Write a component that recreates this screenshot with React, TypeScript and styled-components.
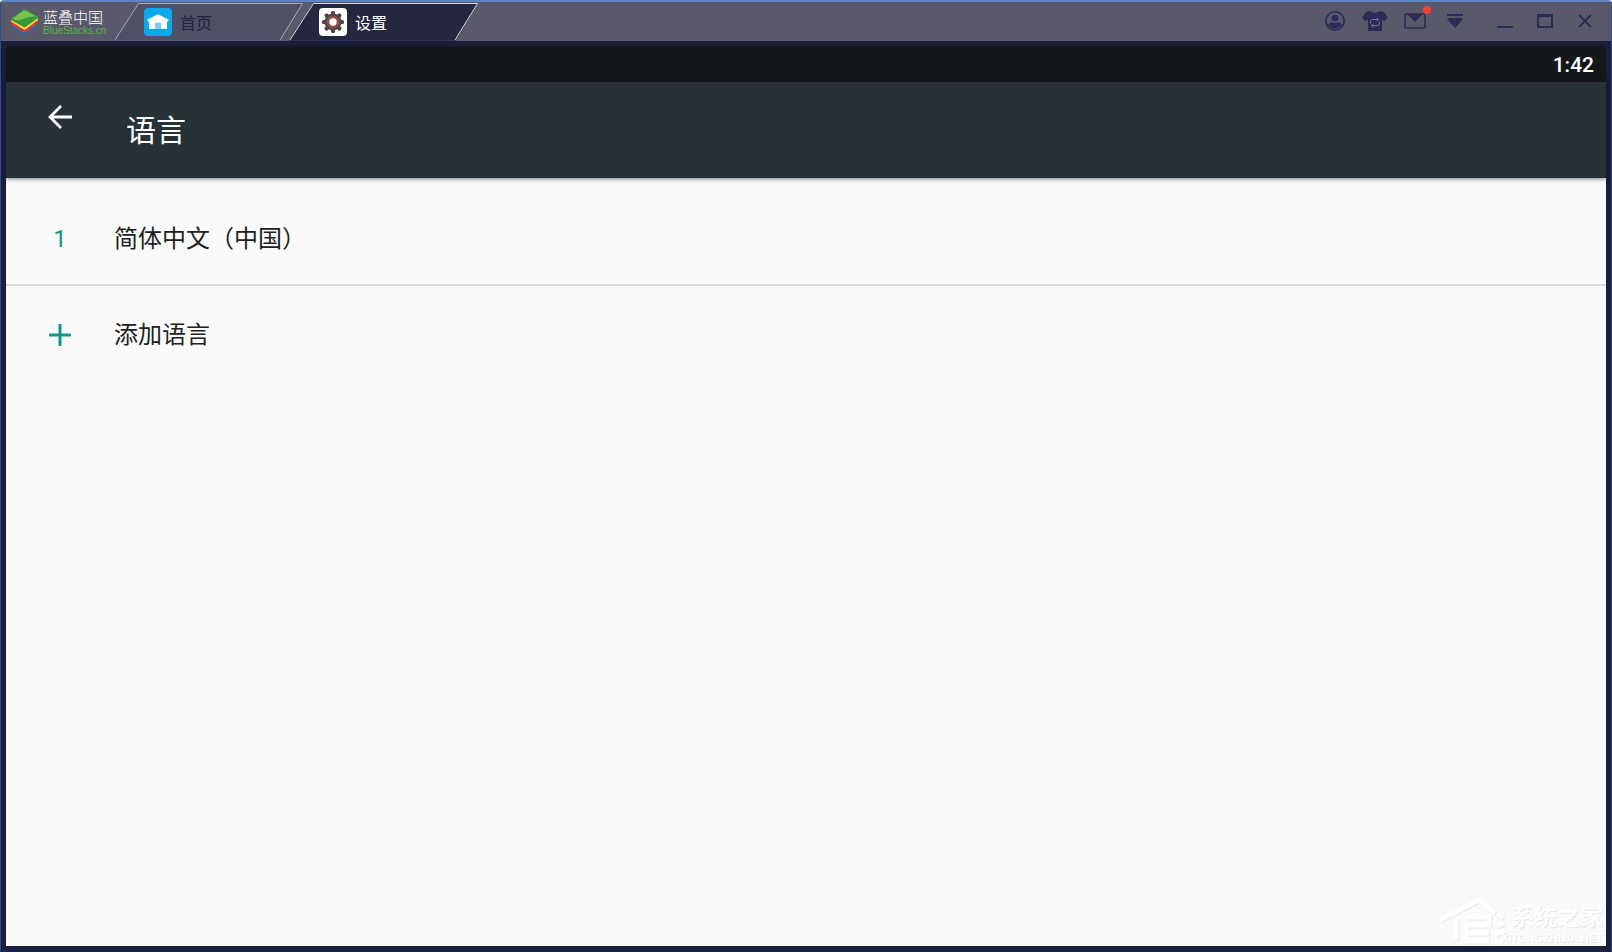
import React from "react";
import styled, { createGlobalStyle } from "styled-components";

const GlobalStyle = createGlobalStyle`
  *, *::before, *::after { box-sizing: border-box; }
  body {
    margin: 0;
    background: #fff;
    font-family: Roboto, "Noto Sans CJK SC", sans-serif;
  }
  button { border: 0; padding: 0; margin: 0; background: none; color: inherit; font: inherit; cursor: pointer; }
  svg { display: block; flex: none; }
`;

const AppWindow = styled.div`
  display: flex;
  flex-direction: column;
  min-height: 100vh;
  background: #1a1e3c;
  border: 1px solid #2c4c8c;
  border-top: 2px solid #5c84c0;
  border-bottom-color: #1a2456;
  border-radius: 4px 4px 0 0;
  overflow: hidden;
`;

const TitleBar = styled.header`
  display: flex;
  align-items: stretch;
  height: 39px;
  background: #5a596b;
`;

const Brand = styled.div`
  display: flex;
  align-items: center;
  gap: 4px;
  width: 113px;
  padding-left: 9px;
`;

const BrandText = styled.div`
  display: flex;
  flex-direction: column;
  padding-top: 2px;
  white-space: nowrap;
`;

const BrandName = styled.span`
  font: 300 15px/16px "Noto Sans CJK SC", sans-serif;
  color: #fff;
`;

const BrandSite = styled.span`
  font: 10px/11px "Liberation Sans", sans-serif;
  color: #52b848;
`;

const Tabs = styled.nav`
  display: flex;
`;

const Tab = styled.button<{ $active?: boolean }>`
  position: relative;
  display: flex;
  align-items: center;
  gap: 8px;
  width: 189px;
  padding-left: 30px;
  font-size: 16px;
  line-height: 24px;
  color: ${(p) => (p.$active ? "#fff" : "#1f2140")};
  & + & { margin-left: -14px; }
`;

const TabShape = styled.svg`
  position: absolute;
  inset: 0;
`;

const TabIcon = styled.span<{ $color: string }>`
  position: relative;
  display: grid;
  place-items: center;
  width: 28px;
  height: 28px;
  border-radius: 4px;
  background: ${(p) => p.$color};
`;

const TabLabel = styled.span`
  position: relative;
  padding-top: 4px;
`;

const Tools = styled.div`
  display: flex;
  margin-left: auto;
  padding-right: 6px;
  color: #2b2b55;
`;

const ToolGroup = styled.div`
  display: flex;
  & + & { margin-left: 10px; }
`;

const ToolButton = styled.button`
  position: relative;
  display: grid;
  place-items: center;
  width: 40px;
  height: 38px;
`;

const UnreadDot = styled.span`
  position: absolute;
  top: 4px;
  right: 4px;
  width: 8px;
  height: 8px;
  border-radius: 50%;
  background: #f8402f;
`;

const Screen = styled.main`
  display: flex;
  flex: 1;
  flex-direction: column;
  margin: 5px 5px;
  background: #fafafa;
`;

const StatusBar = styled.div`
  display: flex;
  align-items: center;
  justify-content: flex-end;
  height: 36px;
  padding: 2px 12px 0 0;
  background: #14181b;
  color: #fff;
  font-size: 21px;
  font-weight: 500;
`;

const AppBar = styled.div`
  display: flex;
  align-items: flex-start;
  gap: 46px;
  height: 96px;
  padding: 18px 38px;
  background: #263238;
  color: #fff;
  box-shadow: 0 1px 4px rgba(0, 0, 0, 0.5);
`;

const BackButton = styled.button`
  display: grid;
  place-items: center;
  width: 32px;
  height: 34px;
`;

const Title = styled.h1`
  margin: 11px 0 0 4px;
  font-size: 30px;
  font-weight: 400;
  line-height: 40px;
`;

const Languages = styled.ol`
  margin: 0 0 4px;
  padding: 16px 0 0;
  list-style: none;
`;

const Row = styled.button`
  display: flex;
  align-items: center;
  width: 100%;
  height: 90px;
  padding-left: 36px;
  font-size: 24px;
  line-height: 36px;
  color: #212121;
  text-align: left;
`;

const LanguageItem = styled.li`
  border-bottom: 2px solid #d8d8d8;
`;

const Marker = styled.span`
  display: flex;
  justify-content: center;
  width: 36px;
  margin-right: 36px;
  color: #159586;
`;

const Watermark = styled.footer`
  display: flex;
  align-items: flex-end;
  justify-content: flex-end;
  margin-top: auto;
  padding-right: 3px;
  color: #fff;
`;

const WatermarkText = styled.div`
  display: flex;
  flex-direction: column;
  align-items: flex-end;
  margin-left: -8px;
  text-shadow: 1px 1px 1px #e4e4e4;
`;

const WatermarkName = styled.span`
  font-size: 23px;
  font-weight: 700;
  line-height: 24px;
`;

const WatermarkSite = styled.span`
  font: 700 11px/16px "Liberation Sans", sans-serif;
`;

function TabBackground({ active }: { active?: boolean }) {
  return (
    <TabShape width="189" height="39" viewBox="0 0 189 39" aria-hidden="true">
      <path d="M0 39 24 1.500H189L166 39Z" fill={active ? "#24273f" : "#4f5065"} />
      <path
        d="M1 38 24.500 1.500H188.500L166 38"
        fill="none"
        stroke={active ? "#d5d5e2" : "#aaaabb"}
        strokeWidth="1"
      />
      <path d="M1 38.500H166" stroke={active ? "#34364f" : "#5d5e72"} />
    </TabShape>
  );
}

function LogoMark() {
  return (
    <svg width="29" height="28" viewBox="0 0 29 28" aria-hidden="true">
      <path d="M2 16 14.500 25 27 15V18L16 26.500Q14.500 27.500 13 26.500L2 19Z" fill="#2769b4" />
      <path d="M1 13 14.500 22 28 12V14.500L16 24.200Q14.500 25.200 13 24.200L1 16Z" fill="#e13625" />
      <path d="M1 10.500 14.500 19 28 9.500V12L15.500 21.500Q14.500 22.300 13.500 21.500L1 13.500Z" fill="#ffd34a" />
      <path d="M1 10.500 13 1.800Q14.500 .800 16 1.600L28 8.500V10L15.500 19Q14.500 19.700 13.500 19L1 12Z" fill="#38983a" />
      <path d="M3 10.500 13.200 3Q14.500 2.200 16 3L26 8.500Q19 8 13 11T3 10.500Z" fill="#78c152" />
    </svg>
  );
}

function HomeIcon() {
  return (
    <svg width="22" height="18" viewBox="0 0 22 18" aria-hidden="true">
      <path d="M.500 8V6.500L10 1.800Q11 1.300 12 1.800L21.500 6.500V8L20 9V16H2V9Z" fill="#fff" />
      <path d="M8 16V10.500Q8 9.500 9 9.500H13Q14 9.500 14 10.500V16Z" fill="#83caef" />
    </svg>
  );
}

function GearIcon() {
  return (
    <svg width="24" height="24" viewBox="0 0 24 24" aria-hidden="true">
      {[0, 45, 90, 135].map((angle) => (
        <rect key={angle} x="10" y="1" width="4" height="22" rx="1.500" fill="#484443" transform={`rotate(${angle} 12 12)`} />
      ))}
      <circle cx="12" cy="12" r="8.500" fill="#504543" />
      <circle cx="12" cy="12" r="6.500" fill="#85514a" />
      <circle cx="12" cy="12" r="3.700" fill="#fff" />
    </svg>
  );
}

function AccountIcon() {
  return (
    <svg width="22" height="22" viewBox="0 0 22 22" aria-hidden="true">
      <circle cx="11" cy="11" r="9.200" fill="none" stroke="currentColor" strokeWidth="1.600" />
      <circle cx="11" cy="8" r="3.300" fill="currentColor" />
      <path d="M4 15Q5 12.500 8.200 12.300Q11 14 13.800 12.300Q17 12.500 18 15Q15.500 18.700 11 18.700T4 15Z" fill="currentColor" />
    </svg>
  );
}

function ShirtIcon() {
  return (
    <svg width="26" height="22" viewBox="0 0 26 22" aria-hidden="true">
      <path d="M8 1Q13 4.500 18 1L22 2 26 7.500 22.500 11 20 9.500V21H6V9.500L3.500 11 0 7.500 4 2Z" fill="currentColor" />
      <path d="M8.500 13.500V11.500Q8.500 9.500 10.500 9.500H16M14.500 8 16.500 9.500 14.500 11M17.500 11.500V13.500Q17.500 15.500 15.500 15.500H10M11.500 14 9.500 15.500 11.500 17" fill="none" stroke="#77778f" />
    </svg>
  );
}

function MailIcon() {
  return (
    <svg width="22" height="16" viewBox="0 0 22 16" aria-hidden="true">
      <rect x="1" y="1" width="20" height="14" rx="1" fill="none" stroke="currentColor" strokeWidth="1.600" />
      <path d="M3 1H19L11 9Z" fill="currentColor" />
    </svg>
  );
}

function MenuIcon() {
  return (
    <svg width="16" height="14" viewBox="0 0 16 14" aria-hidden="true">
      <path d="M0 0H16V2H0ZM0 5 2 4H14L16 5 8 14Z" fill="currentColor" />
    </svg>
  );
}

function HouseMark() {
  const strokes =
    "M3 24 42 4 58 17M19 24V44M29 21H52V29H29V37H52M29 29V45H52M60 18 66 22M60 30 67 27M58 39 68 34";
  return (
    <svg width="72" height="50" viewBox="0 0 72 50" aria-hidden="true">
      <path d={strokes} fill="none" stroke="#e8e8e8" strokeWidth="5" transform="translate(1 1)" />
      <path d={strokes} fill="none" stroke="#fff" strokeWidth="5" />
    </svg>
  );
}

export default function App() {
  return (
    <>
      <GlobalStyle />
      <AppWindow>
        <TitleBar>
          <Brand>
            <LogoMark />
            <BrandText>
              <BrandName>蓝叠中国</BrandName>
              <BrandSite>BlueStacks.cn</BrandSite>
            </BrandText>
          </Brand>
          <Tabs>
            <Tab>
              <TabBackground />
              <TabIcon $color="#09a9ee"><HomeIcon /></TabIcon>
              <TabLabel>首页</TabLabel>
            </Tab>
            <Tab $active aria-current="page">
              <TabBackground active />
              <TabIcon $color="#fff"><GearIcon /></TabIcon>
              <TabLabel>设置</TabLabel>
            </Tab>
          </Tabs>
          <Tools>
            <ToolGroup>
              <ToolButton aria-label="账户"><AccountIcon /></ToolButton>
              <ToolButton aria-label="主题"><ShirtIcon /></ToolButton>
              <ToolButton aria-label="消息"><MailIcon /><UnreadDot /></ToolButton>
              <ToolButton aria-label="菜单"><MenuIcon /></ToolButton>
            </ToolGroup>
            <ToolGroup>
              <ToolButton aria-label="最小化">
                <svg width="16" height="14" viewBox="0 0 16 14"><path d="M0 13H16" stroke="currentColor" strokeWidth="2" /></svg>
              </ToolButton>
              <ToolButton aria-label="最大化">
                <svg width="16" height="14" viewBox="0 0 16 14"><path d="M0 0H16V14H0ZM2 3V12H14V3Z" fill="currentColor" fillRule="evenodd" /></svg>
              </ToolButton>
              <ToolButton aria-label="关闭">
                <svg width="14" height="14" viewBox="0 0 14 14"><path d="M1 1 13 13M13 1 1 13" stroke="currentColor" strokeWidth="1.800" /></svg>
              </ToolButton>
            </ToolGroup>
          </Tools>
        </TitleBar>
        <Screen>
          <StatusBar><time>1:42</time></StatusBar>
          <AppBar>
            <BackButton aria-label="返回">
              <svg width="24" height="24" viewBox="0 0 24 24"><path d="M24 12H2M13 1 2 12 13 23" fill="none" stroke="currentColor" strokeWidth="2.800" /></svg>
            </BackButton>
            <Title>语言</Title>
          </AppBar>
          <Languages>
            <LanguageItem>
              <Row><Marker>1</Marker>简体中文（中国）</Row>
            </LanguageItem>
          </Languages>
          <Row>
            <Marker>
              <svg width="22" height="22" viewBox="0 0 22 22" aria-hidden="true"><path d="M11 0V22M0 11H22" stroke="currentColor" strokeWidth="3" /></svg>
            </Marker>
            添加语言
          </Row>
          <Watermark>
            <HouseMark />
            <WatermarkText>
              <WatermarkName>系统之家</WatermarkName>
              <WatermarkSite>XITONGZHIJIA.NET</WatermarkSite>
            </WatermarkText>
          </Watermark>
        </Screen>
      </AppWindow>
    </>
  );
}
